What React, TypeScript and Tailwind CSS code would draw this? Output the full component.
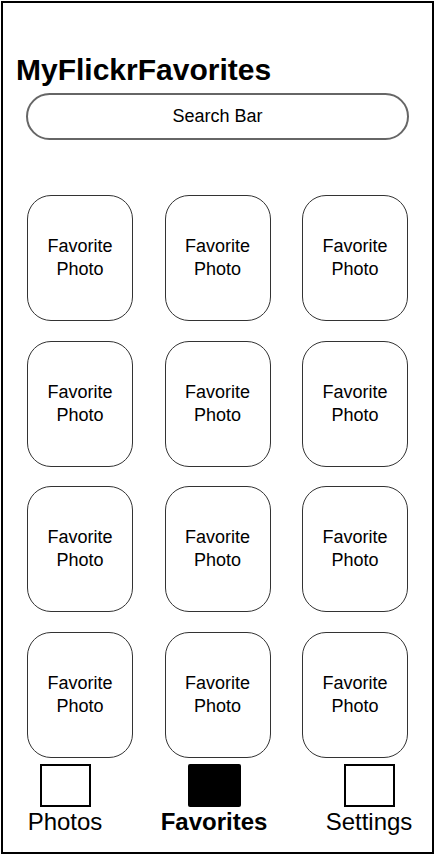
const photos = Array.from({ length: 12 }, (_, i) => i);

const tabs = [
  { label: 'Photos', active: false, w: 'w-[76px]' },
  { label: 'Favorites', active: true, w: 'w-[106px]' },
  { label: 'Settings', active: false, w: 'w-[88px]' },
];

export default function App() {
  return (
    <div className="bg-white w-[436px] h-[856px] pt-px pl-px font-['Liberation_Sans',Arial,sans-serif] text-black">
      <div className="w-[433px] h-[853px] border-2 border-black flex flex-col">
        <h1 className="pt-[52px] pl-[13px] text-[30px] leading-none font-bold">MyFlickrFavorites</h1>

        <div className="mt-2 ml-[23px] w-[383px] h-[47px] rounded-full border-2 border-[#666] flex items-center justify-center text-[18px]">
          Search Bar
        </div>

        <div className="mt-[55px] ml-[24px] w-[381px] grid grid-cols-[106px_106px_106px] justify-between gap-y-[19.5px]">
          {photos.map((i) => (
            <div
              key={i}
              className="h-[126px] rounded-[24px] border border-[#333] flex items-center justify-center text-center text-[18px] leading-[23px]"
            >
              Favorite
              <br />
              Photo
            </div>
          ))}
        </div>

        <div className="mt-[6.5px] ml-[24px] w-[386px] flex justify-between">
          {tabs.map((t) => (
            <div key={t.label} className={`${t.w} flex flex-col items-center`}>
              {t.active ? (
                <div className="w-[53px] h-[43px] bg-black rounded-[2px]" />
              ) : (
                <div className="w-[51px] h-[43px] border-2 border-black" />
              )}
              <span className={`mt-[3px] text-[24px] leading-none whitespace-nowrap ${t.active ? 'font-bold' : ''}`}>
                {t.label}
              </span>
            </div>
          ))}
        </div>
      </div>
    </div>
  );
}
